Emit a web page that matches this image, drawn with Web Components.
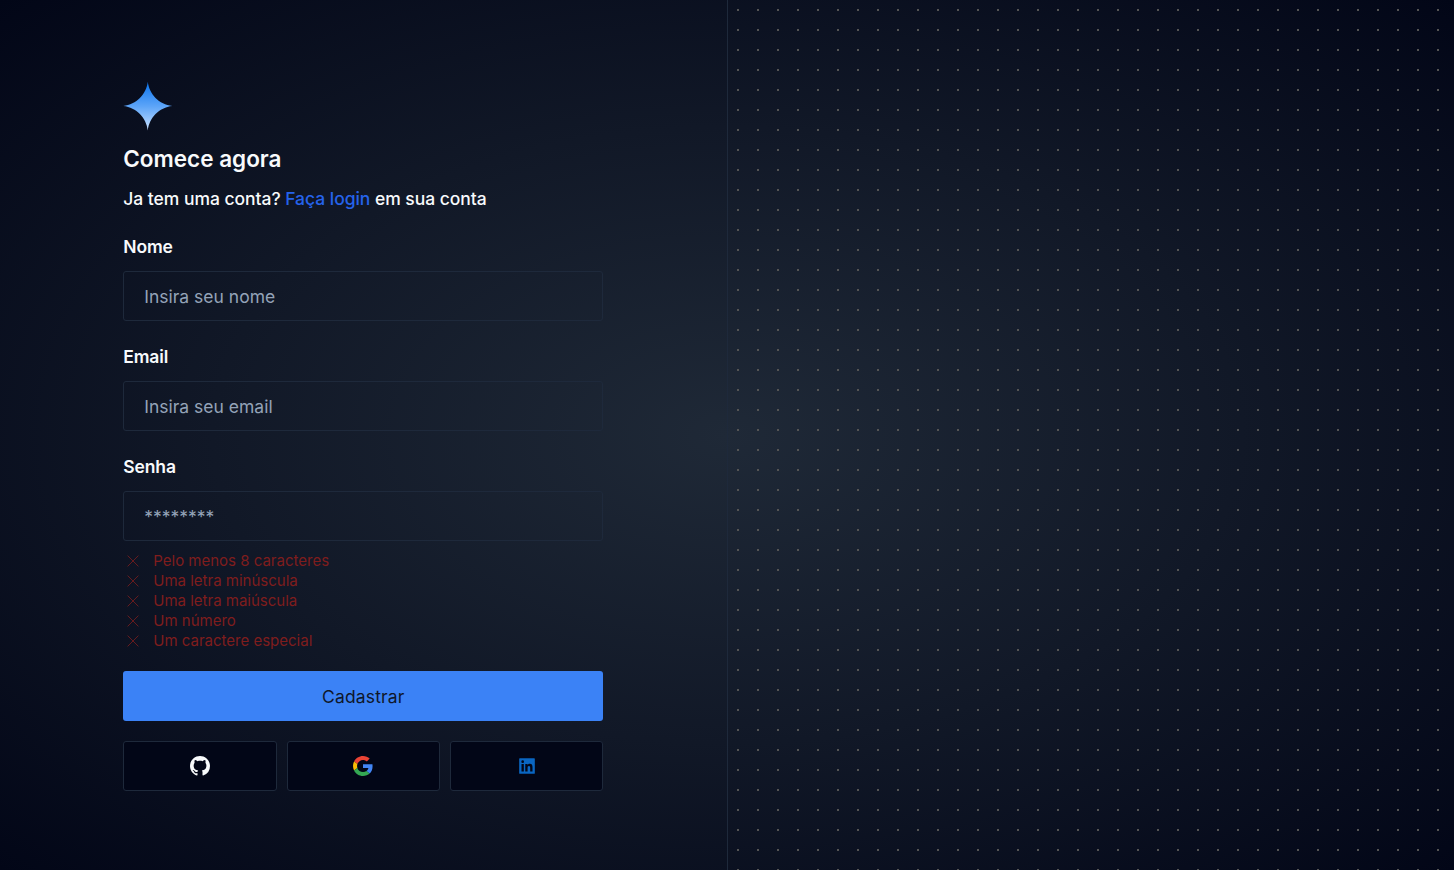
<!DOCTYPE html>
<html lang="pt-BR">
<head>
<meta charset="utf-8">
<title>Cadastro</title>
<style>
html{font-size:20px}
body{margin:0;font-family:Inter,"Liberation Sans",sans-serif;color:#f8fafc}
</style>
</head>
<body>
<sign-up-page></sign-up-page>
<script>
const define=(name,html,setup)=>customElements.define(name,class extends HTMLElement{
  connectedCallback(){
    if(this.shadowRoot)return;
    const t=document.createElement('template');
    t.innerHTML=html;
    this.attachShadow({mode:'open'}).append(t.content.cloneNode(true));
    if(setup)setup(this,this.shadowRoot);
  }
});

define('brand-star',`<style>:host{display:block;height:50px}svg{display:block}</style>
<svg width="50" height="50" viewBox="0 0 50 50"><defs><linearGradient id="g" x1="0" y1="0" x2="0" y2="1"><stop stop-color="#0a74ee"/><stop offset=".5" stop-color="#5ca4f8"/><stop offset="1" stop-color="#c9e1ff"/></linearGradient></defs>
<path fill="url(#g)" d="M24.800 .8C26.200 13.300 36 23.600 49.300 24.900C36 26.300 26.200 36.700 24.800 49.400C23.400 36.700 13.500 26.300 .3 24.900C13.500 23.600 23.400 13.300 24.800 .8Z"/></svg>`);

define('form-field',`<style>
:host{display:block}
label{display:block;font-size:.875rem;line-height:25px;font-weight:600;letter-spacing:-.12px;margin-bottom:12px}
input{display:block;box-sizing:border-box;width:100%;height:50px;padding:0 20px;border:1px solid #1e293b;border-radius:3px;background:transparent;color:inherit;font:400 .875rem Inter,"Liberation Sans",sans-serif;outline:none}
input::placeholder{color:#94a3b8;opacity:1}
</style><label><slot></slot></label><input>`,(host,root)=>{
  root.querySelector('input').placeholder=host.getAttribute('placeholder');
});

define('password-rule',`<style>
:host{display:flex;align-items:center;gap:10px;height:20px;color:#7f1d1d;font-size:.75rem;line-height:20px;font-weight:400}
</style><svg width="20" height="20" viewBox="0 0 256 256" fill="none" stroke="currentColor" stroke-width="10"><path d="M59 59 197 197M197 59 59 197"/></svg><span><slot></slot></span>`);

define('submit-button',`<style>
:host{display:block}
button{display:block;width:100%;height:50px;border:0;border-radius:3px;background:#3b82f6;color:#0f172a;font:400 .875rem Inter,"Liberation Sans",sans-serif;letter-spacing:.14px;padding:0}
</style><button><slot></slot></button>`);

const icons={
github:'<svg width="20" height="20" viewBox="0 0 16 16"><path fill="#f8fafc" d="M8 0C3.580 0 0 3.580 0 8c0 3.540 2.290 6.530 5.470 7.590.4.070.55-.17.55-.38 0-.19-.01-.82-.01-1.490-2.010.37-2.530-.49-2.690-.94-.09-.23-.48-.94-.82-1.130-.28-.15-.68-.52-.01-.53.63-.01 1.080.58 1.230.82.72 1.210 1.870.87 2.330.66.070-.52.28-.87.51-1.070-1.780-.2-3.640-.89-3.640-3.950 0-.87.31-1.590.82-2.150-.08-.2-.36-1.020.08-2.120 0 0 .67-.21 2.200.82.64-.18 1.320-.27 2-.27s1.360.09 2 .27c1.530-1.040 2.200-.82 2.200-.82.44 1.100.16 1.920.08 2.120.51.56.82 1.270.82 2.150 0 3.070-1.870 3.750-3.650 3.950.29.25.54.73.54 1.480 0 1.070-.01 1.930-.01 2.200 0 .21.15.46.55.38A8.010 8.010 0 0 0 16 8c0-4.420-3.580-8-8-8Z"/></svg>',
google:'<svg width="20" height="20" viewBox="0 0 48 48"><path fill="#EA4335" d="M24 9.500c3.540 0 6.710 1.220 9.210 3.600l6.850-6.850C35.900 2.380 30.470 0 24 0 14.620 0 6.510 5.380 2.560 13.220l7.980 6.190C12.430 13.720 17.740 9.500 24 9.500z"/><path fill="#4285F4" d="M46.980 24.550c0-1.570-.15-3.090-.38-4.550H24v9.020h12.940c-.58 2.960-2.260 5.480-4.780 7.180l7.730 6c4.510-4.180 7.090-10.360 7.090-17.650z"/><path fill="#FBBC05" d="M10.530 28.590c-.48-1.450-.76-2.990-.76-4.590s.27-3.140.76-4.590l-7.980-6.190C.92 16.460 0 20.120 0 24s.92 7.540 2.560 10.780l7.970-6.190z"/><path fill="#34A853" d="M24 48c6.480 0 11.930-2.130 15.890-5.810l-7.730-6c-2.150 1.450-4.920 2.300-8.160 2.300-6.260 0-11.570-4.220-13.470-9.910l-7.980 6.190C6.510 42.620 14.620 48 24 48z"/></svg>',
linkedin:'<svg width="20" height="20" viewBox="0 0 1024 1024"><path fill="#0a66c2" d="M880 112H144c-17.700 0-32 14.300-32 32v736c0 17.700 14.300 32 32 32h736c17.700 0 32-14.300 32-32V144c0-17.700-14.300-32-32-32zM349.300 793.700H230.600V411.900h118.700v381.800zM290 359.800a68.800 68.800 0 1 1 68.800-68.800c-.1 38-30.900 68.800-68.800 68.800zm503.700 433.900H675.100V608c0-44.300-.8-101.200-61.700-101.200-61.700 0-71.200 48.200-71.200 98v188.900H423.700V411.900h113.800v52.200h1.600c15.800-30 54.500-61.700 112.300-61.700 120.200 0 142.300 79.100 142.300 181.900v209.400z"/></svg>'};
define('social-button',`<style>
:host{display:block;min-width:0}
button{display:flex;align-items:center;justify-content:center;box-sizing:border-box;width:100%;height:50px;padding:0;border:1px solid #1e293b;border-radius:3px;background:#020617}
svg{display:block}
</style><button></button>`,(host,root)=>{
  const b=root.querySelector('button');
  b.setAttribute('aria-label',host.getAttribute('provider'));
  b.innerHTML=icons[host.getAttribute('provider')];
});

define('sign-up-form',`<style>
:host{display:flex;flex-direction:column;width:480px}
h1{margin:15px 0 0;font-size:1.125rem;line-height:25px;font-weight:600}
p{margin:15px 0 0;font-size:.875rem;line-height:25px;font-weight:500;letter-spacing:-.04px}
a{color:#2563eb;text-decoration:none}
.fields{display:flex;flex-direction:column;gap:23px;margin-top:23px}
.rules{margin-top:10px}
submit-button{margin-top:20px}
.social{display:grid;grid-template-columns:repeat(3,1fr);gap:10px;margin-top:20px}
</style>
<brand-star></brand-star>
<h1>Comece agora</h1>
<p>Ja tem uma conta? <a>Faça login</a> em sua conta</p>
<div class="fields">
<form-field placeholder="Insira seu nome">Nome</form-field>
<form-field placeholder="Insira seu email">Email</form-field>
<form-field placeholder="********">Senha</form-field>
</div>
<div class="rules">
<password-rule>Pelo menos 8 caracteres</password-rule>
<password-rule>Uma letra minúscula</password-rule>
<password-rule>Uma letra maiúscula</password-rule>
<password-rule>Um número</password-rule>
<password-rule>Um caractere especial</password-rule>
</div>
<submit-button>Cadastrar</submit-button>
<div class="social">
<social-button provider="github"></social-button>
<social-button provider="google"></social-button>
<social-button provider="linkedin"></social-button>
</div>`);

define('sign-up-page',`<style>
:host{display:grid;grid-template-columns:1fr 1fr;height:100vh;overflow:hidden;background:radial-gradient(ellipse at center,#1f2937,#111827,#020617)}
main{display:flex;align-items:center;justify-content:center;box-sizing:border-box;padding:2px .5px 0 0}
aside{border-left:1px solid #1e293b;background:radial-gradient(#555 1px,transparent 0) 0 0/20px 20px}
</style><main><sign-up-form></sign-up-form></main><aside></aside>`);
</script>
</body>
</html>
